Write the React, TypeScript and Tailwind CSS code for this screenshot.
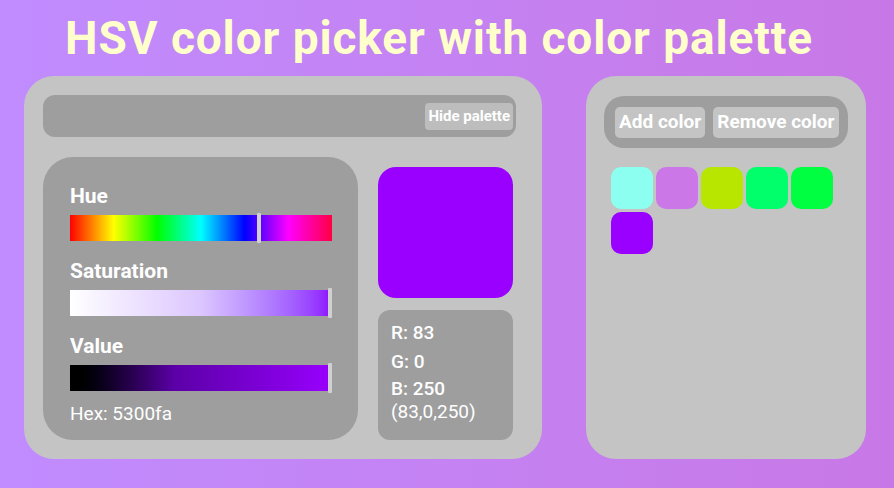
const palette = ["#8cfff0", "#cc77e8", "#b8e600", "#00ff6a", "#00ff40", "#9900ff"];

function SliderRow({
  label,
  barClass,
  thumb,
}: {
  label: string;
  barClass: string;
  thumb: number;
}) {
  return (
    <div className="flex flex-col">
      <div className="text-[21px] font-bold leading-[24px] text-white">{label}</div>
      <div className={`relative mt-[7px] h-[26px] w-[262px] ${barClass}`}>
        <div
          className="absolute -top-[2px] h-[30px] w-[4px] rounded-[1px] bg-[#d0d0d0]"
          style={{ left: thumb }}
        />
      </div>
    </div>
  );
}

export default function App() {
  return (
    <div
      className="flex h-[488px] w-[894px] flex-col bg-gradient-to-r from-[#c08cff] to-[#c878e6]"
      style={{ fontFamily: "Roboto, 'Liberation Sans', sans-serif" }}
    >
      {/* Title */}
      <h1 className="mt-[11px] pl-[65px] text-[46px] font-bold leading-[54px] tracking-[0.9px] text-[#ffffcc]">
        HSV color picker with color palette
      </h1>

      <div className="mt-[11px] flex gap-[44px] pl-[24px]">
        {/* Picker panel */}
        <div className="flex h-[383px] w-[518px] flex-col rounded-[30px] bg-[#c4c4c4] pl-[19px] pr-[26px] pt-[19px]">
          <div className="flex h-[42px] items-center justify-end rounded-[12px] bg-[#9e9e9e] pr-[3px]">
            <button className="h-[27px] rounded-[4px] bg-[#bdbdbd] px-[3px] text-[15px] font-bold text-white">
              Hide palette
            </button>
          </div>

          <div className="mt-[20px] flex gap-[20px]">
            <div className="flex h-[283px] w-[315px] flex-col gap-[18px] rounded-[30px] bg-[#9e9e9e] pl-[27px] pt-[27px]">
              <SliderRow
                label="Hue"
                thumb={187}
                barClass="bg-[linear-gradient(to_right,#ff0000,#ffff00,#00ff00,#00ffff,#0000ff,#ff00ff,#ff0044)]"
              />
              <SliderRow
                label="Saturation"
                thumb={258}
                barClass="bg-gradient-to-r from-white via-[#dcc6ff] to-[#8f00ff]"
              />
              <SliderRow
                label="Value"
                thumb={258}
                barClass="bg-gradient-to-r from-black via-[#5c00a8] via-40% to-[#9900ff]"
              />
              <div className="-mt-[6px] text-[19px] leading-[22px] text-white">Hex: 5300fa</div>
            </div>

            <div className="flex w-[135px] flex-col pt-[10px]">
              <div className="h-[131px] rounded-[18px] bg-[#9900ff]" />
              <div className="mt-[12px] flex h-[130px] flex-col rounded-[12px] bg-[#9e9e9e] pl-[13px] pt-[12px] text-[19px] leading-[22px] text-white">
                <div className="font-medium">R: 83</div>
                <div className="mt-[7px] font-medium">G: 0</div>
                <div className="mt-[5px] font-medium">B: 250</div>
                <div className="mt-[1px]">(83,0,250)</div>
              </div>
            </div>
          </div>
        </div>

        {/* Palette panel */}
        <div className="flex h-[383px] w-[280px] flex-col rounded-[30px] bg-[#c4c4c4] px-[18px] pt-[20px]">
          <div className="flex h-[52px] items-center gap-[8px] rounded-[20px] bg-[#9e9e9e] pl-[11px]">
            <button className="h-[31px] rounded-[5px] bg-[#c4c4c4] px-[4px] text-[19px] font-bold text-white">
              Add color
            </button>
            <button className="h-[31px] rounded-[5px] bg-[#c4c4c4] px-[4px] text-[19px] font-bold text-white">
              Remove color
            </button>
          </div>

          <div className="mt-[19px] ml-[7px] flex w-[230px] flex-wrap gap-[3px]">
            {palette.map((c) => (
              <div key={c} className="h-[42px] w-[42px] rounded-[10px]" style={{ backgroundColor: c }} />
            ))}
          </div>
        </div>
      </div>
    </div>
  );
}
